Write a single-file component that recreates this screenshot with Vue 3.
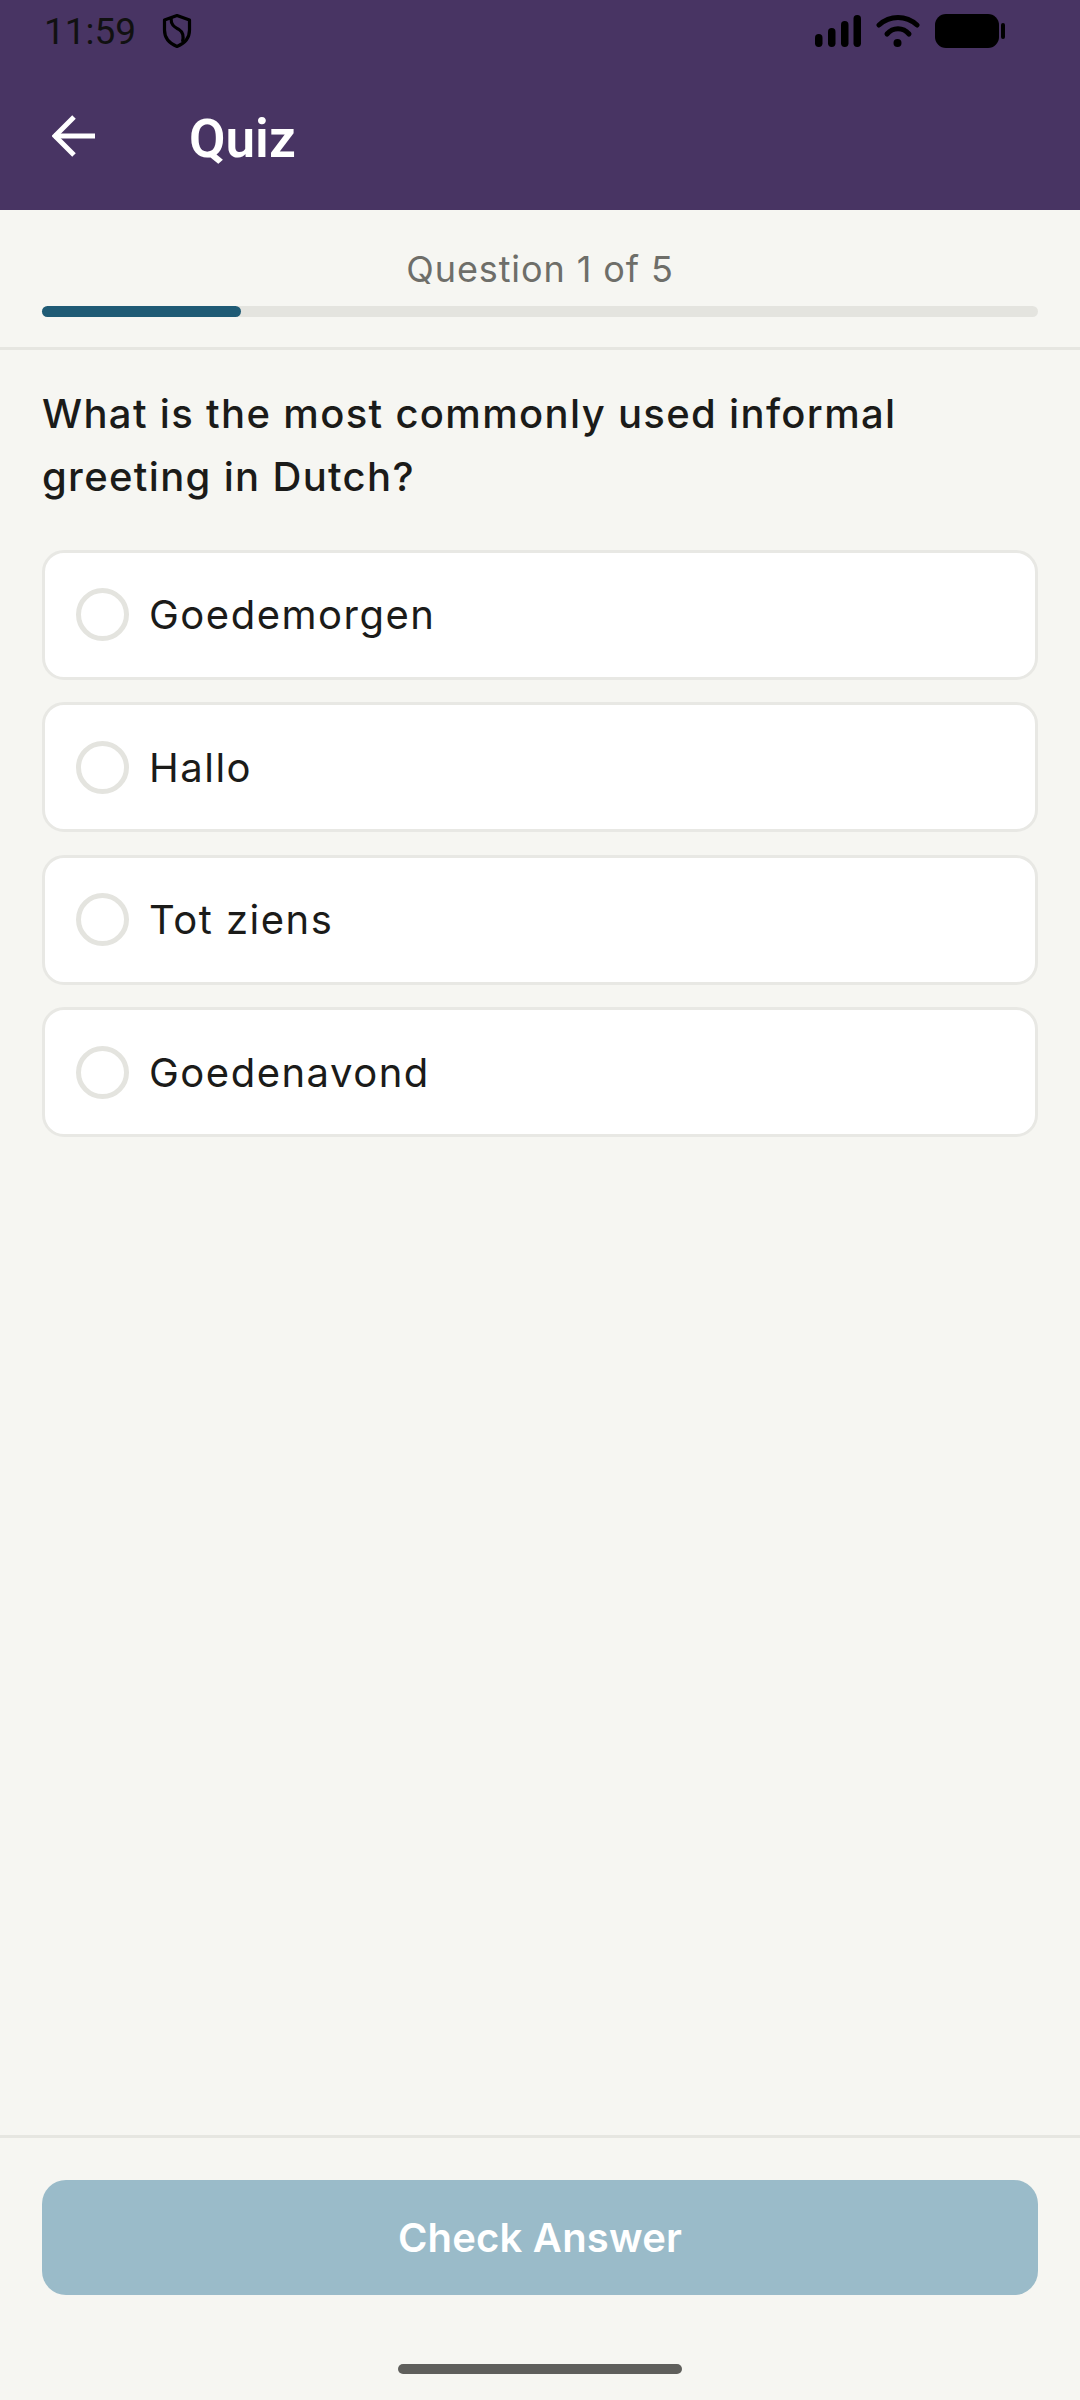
<template>
  <div class="quiz-page">
    <!-- header -->
    <header class="app-header">
      <div class="status-bar">
        <div class="status-left">
          <span class="time">11:59</span>
          <svg class="shield" viewBox="0 0 30 36" fill="none" stroke="#000" stroke-width="3.200">
            <path d="M15 2.500 L27.500 7 V17 C27.500 24.500 22.500 30.500 15 33.500 C7.500 30.500 2.500 24.500 2.500 17 V7 Z" stroke-linejoin="round" />
            <path d="M9 5 C9 13 13 14 17 16.500 C21 19 22 23 20.500 29" />
          </svg>
        </div>
        <div class="status-right">
          <svg class="signal" viewBox="0 0 46 32" fill="#000">
            <rect x="0" y="19" width="7.500" height="13" rx="3.700" />
            <rect x="13" y="13" width="7.500" height="19" rx="3.700" />
            <rect x="26" y="6" width="7.500" height="26" rx="3.700" />
            <rect x="38.500" y="0" width="7.500" height="32" rx="3.700" />
          </svg>
          <svg class="wifi" viewBox="0 0 44 32" fill="none" stroke="#000" stroke-width="5" stroke-linecap="round">
            <path d="M3 10 C14 0 30 0 41 10" />
            <path d="M11 19 C17 12 27 12 33 19" />
            <circle cx="21.500" cy="28" r="4" fill="#000" stroke="none" />
          </svg>
          <svg class="battery" viewBox="0 0 70 34" fill="#000">
            <rect x="0" y="0" width="64" height="34" rx="11" />
            <rect x="66" y="9" width="4" height="16" rx="2" />
          </svg>
        </div>
      </div>
      <div class="toolbar">
        <svg class="back" viewBox="0 0 44 44" fill="none" stroke="#fff" stroke-width="5">
          <path d="M2 22 H43" />
          <path d="M22 3 L3 22 L22 41" />
        </svg>
        <h1>Quiz</h1>
      </div>
    </header>

    <!-- progress -->
    <section class="progress">
      <p class="progress-label">Question 1 of 5</p>
      <div class="track">
        <div class="fill" :style="{ width: progress + '%' }"></div>
      </div>
    </section>

    <!-- question -->
    <main class="content">
      <h2>What is the most commonly used informal<br />greeting in Dutch?</h2>
      <div class="options">
        <div v-for="o in options" :key="o" class="option">
          <span class="radio"></span>
          <span class="option-text">{{ o }}</span>
        </div>
      </div>
    </main>

    <!-- footer -->
    <footer class="footer">
      <button class="check">Check Answer</button>
      <div class="home-bar"></div>
    </footer>
  </div>
</template>

<script setup>
const progress = 20;
const options = ["Goedemorgen", "Hallo", "Tot ziens", "Goedenavond"];
</script>

<style>
html,
body {
  margin: 0;
  background: #f6f6f2;
}
</style>

<style scoped>
.quiz-page {
  display: flex;
  flex-direction: column;
  height: 2400px;
  background: #f6f6f2;
  font-family: "Inter", "Liberation Sans", sans-serif;
  color: #1b1b19;
}

.app-header {
  height: 210px;
  background: #483463;
  flex-shrink: 0;
}

.status-bar {
  display: flex;
  justify-content: space-between;
  align-items: center;
  height: 62px;
  padding: 0 75px 0 44px;
  box-sizing: border-box;
}

.status-left {
  display: flex;
  align-items: center;
  gap: 26px;
}

.time {
  font-family: "Roboto", sans-serif;
  font-size: 37px;
  color: #111;
}

.shield {
  width: 30px;
  height: 36px;
}

.status-right {
  display: flex;
  align-items: center;
  gap: 15px;
}

.signal {
  width: 46px;
  height: 32px;
}

.wifi {
  width: 44px;
  height: 32px;
}

.battery {
  width: 70px;
  height: 34px;
}

.toolbar {
  display: flex;
  align-items: center;
  height: 148px;
  padding-left: 52px;
  box-sizing: border-box;
  gap: 93px;
}

.back {
  width: 44px;
  height: 44px;
}

.toolbar h1 {
  margin: 5px 0 0;
  font-family: "Roboto", sans-serif;
  font-size: 53px;
  font-weight: 600;
  color: #fff;
}

.progress {
  padding: 0 42px;
  height: 140px;
  box-sizing: border-box;
  border-bottom: 3px solid #e6e6e1;
  flex-shrink: 0;
}

.progress-label {
  margin: 0;
  padding-top: 35px;
  height: 61px;
  line-height: 48px;
  text-align: center;
  font-size: 36px;
  letter-spacing: 0.9px;
  color: #6e6e69;
}

.track {
  height: 11px;
  border-radius: 6px;
  background: #e4e4df;
}

.fill {
  height: 100%;
  border-radius: 6px;
  background: #1f5b75;
}

.content {
  flex: 1;
  padding: 32px 42px 0;
}

.content h2 {
  margin: 0 0 41.500px;
  font-size: 40px;
  font-weight: 500;
  line-height: 63px;
  letter-spacing: 1.33px;
}

.options {
  display: flex;
  flex-direction: column;
  gap: 22.500px;
}

.option {
  display: flex;
  align-items: center;
  gap: 20px;
  height: 130px;
  box-sizing: border-box;
  padding-left: 31px;
  background: #fff;
  border: 3px solid #e8e8e4;
  border-radius: 22px;
}

.radio {
  width: 53px;
  height: 53px;
  box-sizing: border-box;
  border: 5px solid #e4e4df;
  border-radius: 50%;
}

.option-text {
  font-size: 40px;
  letter-spacing: 1.500px;
}

.footer {
  height: 265px;
  box-sizing: border-box;
  border-top: 3px solid #e6e6e1;
  padding: 42px 42px 0;
  flex-shrink: 0;
}

.check {
  display: block;
  width: 100%;
  height: 115px;
  border: none;
  border-radius: 24px;
  background: #9abbc9;
  color: #fff;
  font-family: "Inter", sans-serif;
  font-size: 40px;
  font-weight: 600;
  letter-spacing: 0.2px;
}

.home-bar {
  width: 284px;
  height: 10px;
  margin: 69px auto 0;
  border-radius: 5px;
  background: #5f5f5c;
}
</style>
